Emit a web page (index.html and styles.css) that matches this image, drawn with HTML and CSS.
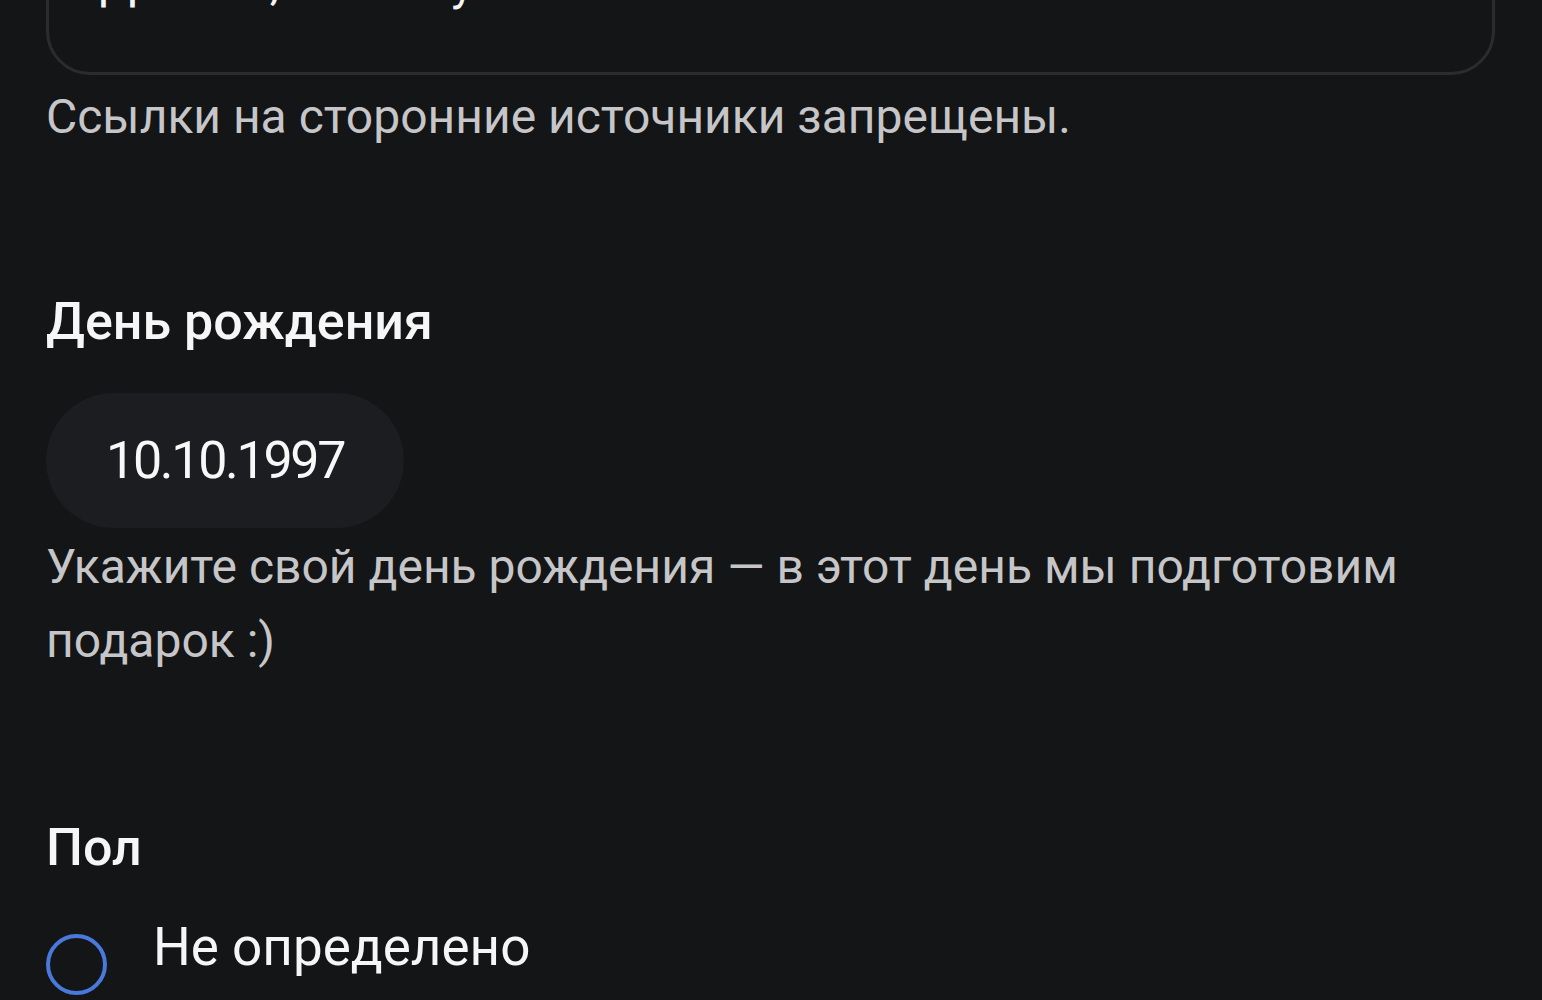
FILE: index.html
```html
<!DOCTYPE html>
<html lang="ru">
<head>
    <meta charset="UTF-8">
    <meta name="viewport" content="width=device-width, initial-scale=1.0">
    <title>Профиль</title>
    <link rel="stylesheet" href="styles.css">
</head>
<body>
    <div class="profile-form">
        <div class="about">
            <div class="about-field">Дизайн, кино и уют</div>
            <p class="hint">Ссылки на сторонние источники запрещены.</p>
        </div>

        <div class="birthday">
            <h2 class="label">День рождения</h2>
            <div class="date-pill">10.10.1997</div>
            <p class="hint">Укажите свой день рождения — в этот день мы подготовим подарок :)</p>
        </div>

        <div class="gender">
            <h2 class="label">Пол</h2>
            <label class="radio-row">
                <span class="radio"></span>
                <span class="radio-text">Не определено</span>
            </label>
        </div>
    </div>
</body>
</html>
```

FILE: styles.css
```css
html {
    box-sizing: border-box;
}
* {
    box-sizing: inherit;
    margin: 0;
    padding: 0;
}
body {
    background-color: #141517;
    color: #f4f4f5;
    font-family: Roboto, "Noto Sans", sans-serif;
    overflow: hidden;
}
.profile-form {
    padding: 0 47px 0 46px;
}

/* about-start */
.about-field {
    height: 160px;
    margin-top: -85px;
    border: 3px solid #2b2c30;
    border-radius: 44px;
    padding: 10px 52px 0 51px;
    display: flex;
    align-items: flex-end;

    font-size: 48px;
    line-height: 74px;
    padding-bottom: 52px;
}
.hint {
    margin-top: 5px;
    font-size: 48px;
    line-height: 74px;
    color: #c6c6c8;
}
/* about-end */

.label {
    font-size: 52px;
    font-weight: 500;
    line-height: 56px;
    color: #f6f6f6;
}
.birthday {
    margin-top: 140px;
}
.date-pill {
    display: inline-flex;
    align-items: center;
    height: 135px;
    margin-top: 43px;
    padding: 0 60px;
    border-radius: 68px;
    background-color: #1c1d20;

    font-size: 52px;
    letter-spacing: -2.3px;
    color: #f8f8f8;
}
.birthday .hint {
    margin-top: 2px;
}

.gender {
    margin-top: 142px;
}
.radio-row {
    display: flex;
    align-items: flex-start;
    gap: 46px;
    margin-top: 39px;
}
.radio {
    width: 61px;
    height: 61px;
    margin-top: 19px;
    border: 4px solid #4a79dc;
    border-radius: 50%;
    flex-shrink: 0;
}
.radio-text {
    font-size: 53px;
    line-height: 64px;
    color: #f6f6f6;
}
```
